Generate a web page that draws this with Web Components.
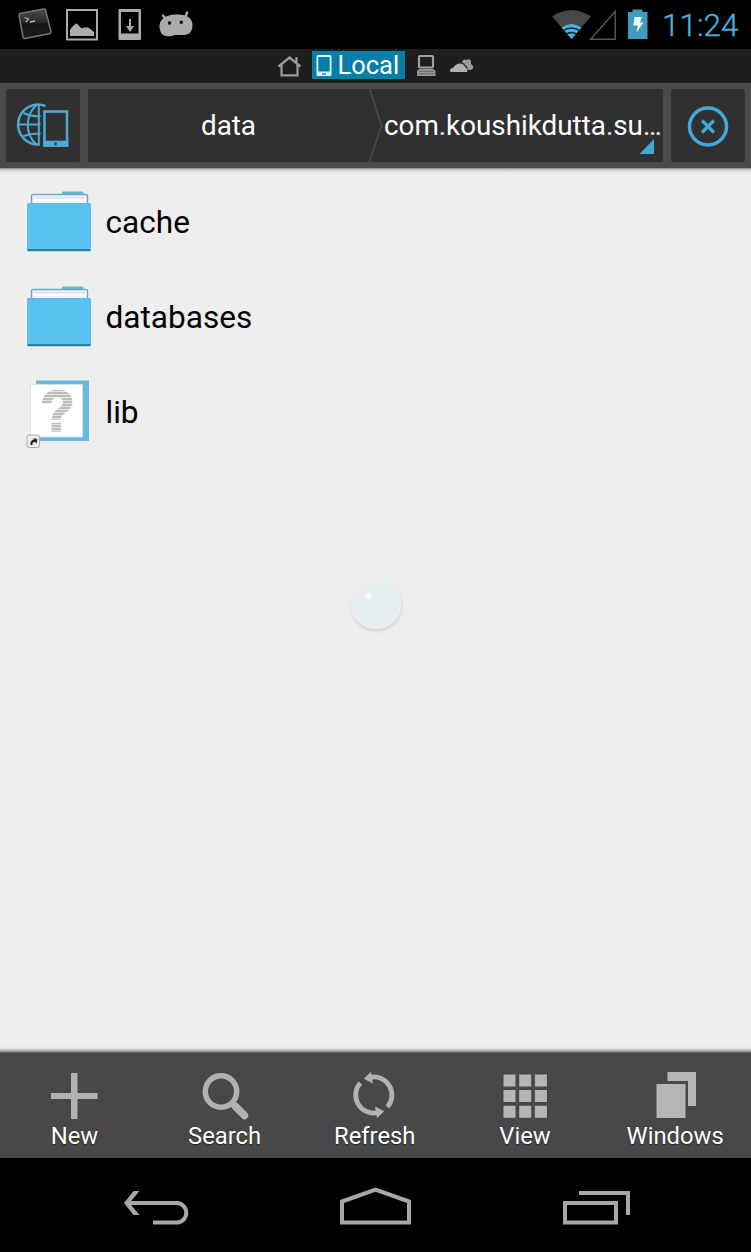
<!DOCTYPE html>
<html lang="en">
<head>
<meta charset="utf-8">
<title>File manager</title>
<style>
html,body{margin:0;padding:0;background:#000}
body{width:751px;height:1252px;overflow:hidden;font-family:Roboto,"Noto Sans",sans-serif}
</style>
</head>
<body>
<file-manager></file-manager>
<script>
const define = (name, html) => customElements.define(name, class extends HTMLElement {
  constructor() {
    super();
    const t = document.createElement('template');
    t.innerHTML = html;
    this.attachShadow({mode: 'open'}).append(t.content.cloneNode(true));
  }
});

define('file-manager', `
<style>
:host{display:flex;flex-direction:column;width:751px;height:1252px}
file-list{flex:1}
</style>
<status-bar></status-bar>
<window-tabs></window-tabs>
<address-bar></address-bar>
<file-list>
  <file-row><folder-icon slot="icon"></folder-icon>cache</file-row>
  <file-row><folder-icon slot="icon"></folder-icon>databases</file-row>
  <file-row><unknown-icon slot="icon"></unknown-icon>lib</file-row>
</file-list>
<action-bar></action-bar>
<nav-bar></nav-bar>`);

define('status-bar', `
<style>
:host{display:flex;height:49px;background:#000;justify-content:space-between}
svg{display:block}
.right{display:flex}
.clock{font-weight:300;font-size:31.500px;line-height:52px;color:#4db1dc;margin-left:13px;width:89px;-webkit-text-stroke:.35px #4db1dc}
</style>
<svg width="210" height="49" viewBox="0 0 210 49">
  <defs><linearGradient id="g" x1="0" y1="0" x2="0" y2="1"><stop offset="0" stop-color="#4a4a4a"/><stop offset=".45" stop-color="#2c2c2c"/><stop offset=".5" stop-color="#151515"/><stop offset="1" stop-color="#1d1d1d"/></linearGradient></defs>
  <path d="M20 13.500L43.500 9Q45 8.800 45.500 10L51 31.500Q51 33 50 33.500L25 38.500Q23.500 38.500 23 37L19 15.500Q19 14 20 13.500Z" fill="url(#g)" stroke="#777" stroke-width="1.500"/>
  <path d="M24.500 17.500L28.500 19L26 22M30 22L35 21" fill="none" stroke="#b5b5b5" stroke-width="1.300"/>
  <rect x="67" y="10" width="30" height="29.500" fill="none" stroke="#ababab" stroke-width="2"/>
  <path d="M70 36V30Q74 24 76.500 23.500Q78 24 80 27L82 28.500Q86 26.500 89 28L94 32V36Z" fill="#ababab"/>
  <path fill-rule="evenodd" d="M119 9H140Q141 9 141 10V39Q141 40 140 40H119.500Q118.500 40 118.500 39V10Q118.500 9 119 9ZM121 12V33.500H138.500V12Z" fill="#ababab"/>
  <path d="M129 19H131V26H134L130 32L126 26H129Z" fill="#ababab"/>
  <path d="M163 15.500L165.500 19M187 12.500L185.500 17" stroke="#ababab" stroke-width="2.400" stroke-linecap="round"/>
  <path d="M160 30C157.500 21 164 14.500 176 14.500C188 14 193 19 192.500 26C192 33.500 188 35.500 181 35H175C169 37.500 161.500 37 160 30Z" fill="#ababab"/>
  <circle cx="169.500" cy="23" r="1.700" fill="#000"/><circle cx="181.300" cy="22.200" r="1.700" fill="#000"/>
</svg>
<div class="right">
<svg width="99" height="49" viewBox="550 0 99 49">
  <path d="M552 16.500Q571.500 3.500 591 16.500L571.500 39Z" fill="#474747"/>
  <path d="M561.500 27.500Q571.500 20.500 581.500 27.500L571.500 39Z" fill="#4db1dc"/>
  <path d="M562 31.500Q571.500 24.500 581 31.500M564.500 35.500Q571.500 29.500 578.500 35.500" fill="none" stroke="#0b2029" stroke-width="1.300"/>
  <path d="M590.500 39.300H615.300V11.500Z" fill="none" stroke="#555" stroke-width="1.500"/>
  <path d="M632.500 9.500H642.500V12H647.500V39H628V12H632.500Z" fill="#3f9cbd"/>
  <path d="M634.500 17H642L640 22.500H643.500L636.500 32.500L637.800 25.500H633.300Z" fill="#e9f8ff"/>
</svg>
<div class="clock">11:24</div>
</div>`);

define('window-tabs', `
<style>
:host{display:flex;height:34px;background:#1e1e1e;justify-content:center;align-items:flex-start}
svg{display:block}
.tab{display:flex;align-items:center;margin-top:2px;height:28px;width:93px;background:#077ea7;color:#fff;font-size:25.500px;line-height:28px}
.tab span{margin-left:5px}
</style>
<svg width="36" height="34" viewBox="276 49 36 34"><path d="M278.500 66.500L289.500 57.500L300.500 66.500M281.500 65V75.300H297.500V65M296.500 57V62" fill="none" stroke="#999" stroke-width="2.300"/></svg>
<div class="tab"><svg width="21" height="28" viewBox="312 51 21 28"><path fill-rule="evenodd" d="M318 55H330Q331.500 55 331.500 56.500V74.500Q331.500 76 330 76H318Q316.500 76 316.500 74.500V56.500Q316.500 55 318 55ZM318.300 57V71.500H329.700V57Z" fill="#d9f6ff"/><path d="M322 74H326" stroke="#077ea7" stroke-width="1.300"/></svg><span>Local</span></div>
<svg width="71" height="34" viewBox="405 49 71 34">
  <rect x="419" y="56" width="14" height="11.500" rx="1" fill="none" stroke="#a0a0a0" stroke-width="2.200"/>
  <path d="M419 69H433.500L435.500 71V76H417V71Z" fill="#999"/><path d="M419 71.300H434M418.500 73.800H434.500" stroke="#5a5a5a" stroke-width=".8"/>
  <path d="M450 71Q450 68 453.500 67.500Q456 63.500 460 63.500Q464 63.500 465 67Q468 68 467 72H451.500Q450 72 450 71Z" fill="#b0b0b0"/>
  <path d="M462 62.500Q463 58.500 466.500 60Q469.500 58 471 61V64Q474 66 473 68.500Q471.500 70.500 467.500 70Q468 66.500 465.500 65.500Q464.500 63 462 62.500Z" fill="#9a9a9a"/>
</svg>`);

define('address-bar', `
<style>
:host{display:flex;box-sizing:border-box;height:85px;background:#4a4a4a;padding:6px 6px 6px;gap:8px}
.box{height:73px;background:#303030;border-radius:2px}
.side{width:74px}
.crumbs{display:flex;width:575px;border-radius:0;color:#fff;font-size:27.800px;line-height:73px;position:relative}
.first{width:281px;text-align:center}
.second{flex:1;margin-left:15px;white-space:nowrap}
svg{display:block}
.over{position:absolute;left:0;top:0}
</style>
<div class="box side"><svg width="74" height="73" viewBox="6 89 74 73" fill="none" stroke="#4ba9d2">
  <path d="M45.500 106A20 20 0 1 0 40 144.500" stroke-width="2.500"/>
  <path d="M38.800 105V144.500M36 105.500C25 116 25 134 36 144M19 124.500H40.500M23.500 113Q31 117 40.500 116M23.500 136Q31 133 40.500 133.500" stroke-width="2"/>
  <rect x="44.500" y="111.500" width="22.500" height="34" stroke-width="2.600"/><path d="M43.300 143.700H68.300" stroke-width="6"/><circle cx="55.500" cy="143.800" r="1.500" fill="#244c60" stroke="none"/>
</svg></div>
<div class="box crumbs"><div class="first">data</div><div class="second">com.koushikdutta.su…</div>
<svg class="over" width="575" height="73" viewBox="88 89 575 73"><path d="M369.500 89L381.500 125.500L369.500 162" fill="none" stroke="#484848" stroke-width="2"/><path d="M654 139V154H639.500Z" fill="#3fabd9"/></svg></div>
<div class="box side"><svg width="74" height="73" viewBox="671 89 74 73" fill="none" stroke="#41a8d5"><circle cx="708" cy="126.500" r="18.500" stroke-width="3.500"/><path d="M702 120.500L714 132.500M714 120.500L702 132.500" stroke-width="3.300"/></svg></div>`);

define('file-list', `
<style>
:host{display:flex;flex-direction:column;box-sizing:border-box;padding-top:6px;position:relative;background:linear-gradient(#8a8a8a 0,#cfcfcf 2px,#eee 5px,#eee calc(100% - 5px),#d8d8d8 calc(100% - 3px),#888 100%)}
svg{position:absolute;left:341px;top:402px}
</style>
<slot></slot>
<svg width="70" height="70" viewBox="341 570 70 70"><defs>
<radialGradient id="s"><stop offset=".82" stop-color="#9aa" stop-opacity=".4"/><stop offset="1" stop-color="#bbb" stop-opacity="0"/></radialGradient>
<radialGradient id="h"><stop offset="0" stop-color="#fff"/><stop offset="1" stop-color="#fff" stop-opacity="0"/></radialGradient></defs>
<circle cx="376.500" cy="606" r="28" fill="url(#s)"/><circle cx="376" cy="604" r="24.500" fill="#e6eeef" stroke="#edf1f1" stroke-width="1.500"/><circle cx="368.500" cy="595.500" r="5" fill="url(#h)"/></svg>`);

define('file-row', `
<style>
:host{display:flex;align-items:center;height:95px;padding-left:24px;color:#000;font-size:31.600px;line-height:40px}
.label{margin-left:11.500px;padding-top:2px}
</style>
<slot name="icon"></slot><div class="label"><slot></slot></div>`);

define('folder-icon', `
<style>:host{display:block;width:70px;height:70px}svg{display:block}</style>
<svg width="70" height="70" viewBox="24 187 70 70">
  <path d="M62 195V192.500Q62 191.500 63.500 191.500H82Q83.500 191.500 83.500 193V196H62Z" fill="#67b4d6"/>
  <path d="M31.500 204V195.500Q31.500 194.500 33 194.500H86Q87.500 194.500 87.500 196V204Z" fill="#f0f3f5" stroke="#6ba9c3" stroke-width="1.400"/>
  <path d="M34 197.500H85" stroke="#dce6ea" stroke-width="2"/><path d="M33 200H86" stroke="#fff" stroke-width="1.500"/>
  <rect x="27" y="203" width="64" height="48.500" rx="1.500" fill="#59c2f0"/>
  <path d="M28 203.500H90" stroke="#69b4d6"/><path d="M27.500 250H90.500" stroke="#3b7b9a" stroke-width="2"/>
</svg>`);

define('unknown-icon', `
<style>:host{display:block;width:70px;height:70px}svg{display:block}text{font:700 57px "Liberation Sans",sans-serif}</style>
<svg width="70" height="70" viewBox="24 377 70 70" overflow="visible">
  <defs><pattern id="p" width="4" height="3" patternUnits="userSpaceOnUse"><rect width="4" height="3" fill="#bdbdbd"/><rect width="4" height="1" y="1" fill="#e6e6e6"/></pattern></defs>
  <rect x="36" y="380.500" width="53" height="60.500" fill="#67bade"/>
  <rect x="30.500" y="384.500" width="52" height="52.500" fill="#fff" stroke="#d5e0e4" stroke-width=".8"/>
  <text x="57.500" y="431" text-anchor="middle" fill="url(#p)" stroke="url(#p)" stroke-width="1.500">?</text>
  <rect x="27" y="435" width="12.500" height="12.500" rx="2" fill="#eee" stroke="#aaa"/>
  <path d="M30.500 445Q29.800 440 34 439.500L33.500 438L37.500 439.500L36.500 443.500L35 442Q32 442 32.500 445Z" fill="#222"/>
</svg>`);

define('action-item', `
<style>
:host{display:flex;flex-direction:column;align-items:center;width:150.200px;color:#fff;font-size:23.800px;line-height:28px;text-shadow:0 1px 1px #222}
::slotted(svg){display:block}
</style>
<slot name="icon"></slot><div><slot></slot></div>`);

define('action-bar', `
<style>
:host{display:flex;box-sizing:border-box;height:106px;background:#484848;padding-top:17px;border-top:1px solid #5c5c5c}
style+action-item{margin-left:-.7px}
</style>
<action-item><svg slot="icon" width="60" height="52" viewBox="44 1070 60 52"><path d="M71 1073H77.500V1093H97.500V1099H77.500V1119H71V1099H51V1093H71Z" fill="#b2b2b2"/></svg>New</action-item>
<action-item><svg slot="icon" width="60" height="52" viewBox="194 1070 60 52"><circle cx="220" cy="1091.500" r="15.700" fill="none" stroke="#b2b2b2" stroke-width="5.500"/><path d="M229.500 1101.500L233 1105" stroke="#b2b2b2" stroke-width="4"/><path d="M234 1106L243.500 1115.500" stroke="#b2b2b2" stroke-width="7.500" stroke-linecap="round"/></svg>Search</action-item>
<action-item><svg slot="icon" width="60" height="52" viewBox="344.500 1070 60 52"><g fill="none" stroke="#b2b2b2" stroke-width="4.800"><path d="M370 1077.300A18 18 0 0 1 386.800 1107"/><path d="M376.600 1112.700A18 18 0 0 1 359.800 1083"/></g><path d="M363.300 1078.800L370.500 1071.800L372.500 1083.500ZM383.700 1111.200L376.500 1118.200L374.500 1106.500Z" fill="#b2b2b2"/></svg>Refresh</action-item>
<action-item><svg slot="icon" width="60" height="52" viewBox="495 1070 60 52"><path d="M503.500 1074.500h12v12h-12zm15.700 0h12v12h-12zm15.700 0h12v12h-12zM503.500 1090h12v12h-12zm15.700 0h12v12h-12zm15.700 0h12v12h-12zM503.500 1105.700h12v12h-12zm15.700 0h12v12h-12zm15.700 0h12v12h-12z" fill="#b5b5b5"/></svg>View</action-item>
<action-item><svg slot="icon" width="60" height="52" viewBox="645 1070 60 52"><path d="M667.500 1072H696V1106H688V1081H667.500ZM656.500 1084H685.500V1118H656.500Z" fill="#b5b5b5"/></svg>Windows</action-item>`);

define('nav-bar', `
<style>
:host{display:flex;height:94px;background:#000;justify-content:center}
svg{display:block}
</style>
<svg width="209" height="94" viewBox="62 1158 209 94"><path d="M127 1203H176.500A9.800 9.800 0 0 1 176.500 1222.600H153" fill="none" stroke="#a8a8a8" stroke-width="4"/><path d="M133.500 1191H139.500L129.500 1203L139.500 1215H133.500L124 1203Z" fill="#a8a8a8"/></svg>
<svg width="209" height="94" viewBox="271 1158 209 94"><path d="M342 1222.500V1201.500L375.500 1189.500L409 1201.500V1222.500Z" fill="none" stroke="#a8a8a8" stroke-width="4"/></svg>
<svg width="209" height="94" viewBox="480 1158 209 94"><path d="M565 1203H616V1222.500H565ZM579 1193H628V1215" fill="none" stroke="#a8a8a8" stroke-width="4"/></svg>`);
</script>
</body>
</html>
